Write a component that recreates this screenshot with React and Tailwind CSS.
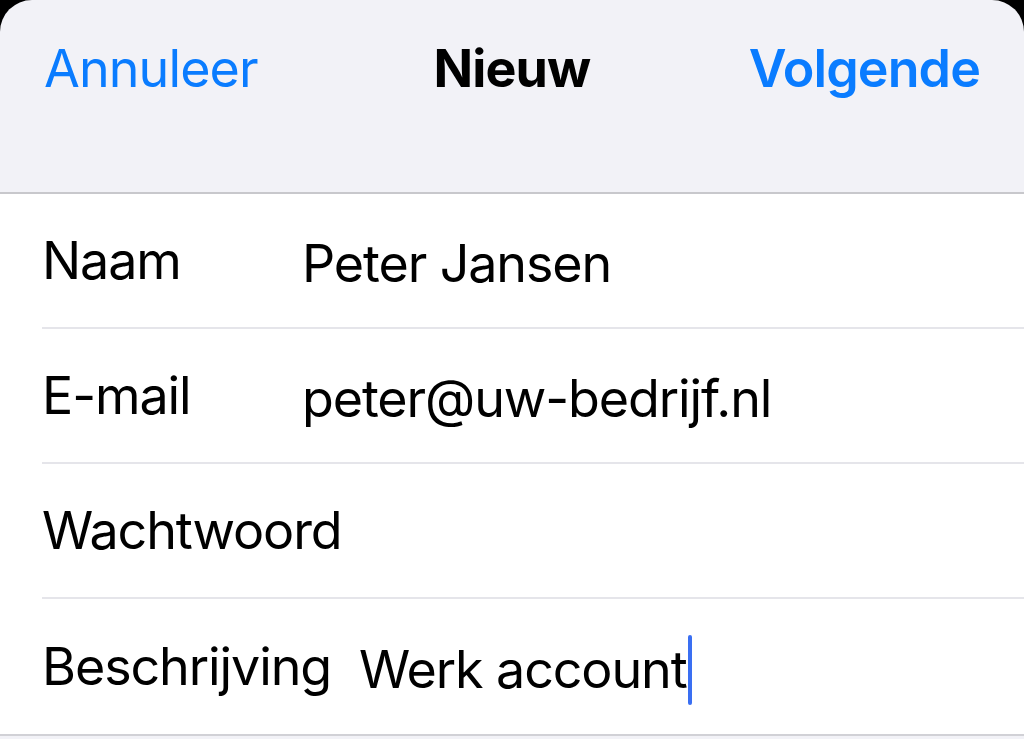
import React from 'react';

const fields = [
  { label: 'Naam', value: 'Peter Jansen' },
  { label: 'E-mail', value: 'peter@uw-bedrijf.nl' },
  { label: 'Wachtwoord', value: '' },
  { label: 'Beschrijving', value: 'Werk account', focused: true },
];

export default function App() {
  return (
    <div className="w-full h-[739px] bg-black overflow-hidden font-['Inter','Liberation_Sans',sans-serif] antialiased">
      <div className="flex flex-col h-full bg-[#f2f2f7] rounded-t-[32px] overflow-hidden">
        {/* Navigation header */}
        <header className="h-[194px] border-b-2 border-[#c8c8cc] shrink-0">
          <div className="grid grid-cols-[1fr_auto_1fr] items-center h-[138px] px-[44px] text-[52px] leading-[64px] tracking-[-0.9px]">
            <span className="text-[#0a7cff]">Annuleer</span>
            <span className="font-bold text-black">Nieuw</span>
            <span className="justify-self-end font-semibold text-[#0a7cff]">Volgende</span>
          </div>
        </header>

        {/* Form rows */}
        <div className="bg-white pl-[42px] border-b-2 border-[#d1d1d6]">
          {fields.map((f, i) => (
            <div
              key={f.label}
              className={
                'flex items-center h-[135px] text-[52px] leading-[64px] text-black tracking-[-1.1px] ' +
                (i < fields.length - 1 ? 'border-b-2 border-[#e5e5ea]' : '')
              }
            >
              <span className="min-w-[232px] mr-[28px] whitespace-nowrap">{f.label}</span>
              <span className="flex items-center pt-[6px] whitespace-nowrap">
                {f.value}
                {f.focused && (
                  <span className="inline-block ml-[1px] w-[4px] h-[70px] rounded-full bg-[#3a6ff2]" />
                )}
              </span>
            </div>
          ))}
        </div>
        <div className="flex-1 bg-[#f2f2f7]" />
      </div>
    </div>
  );
}
